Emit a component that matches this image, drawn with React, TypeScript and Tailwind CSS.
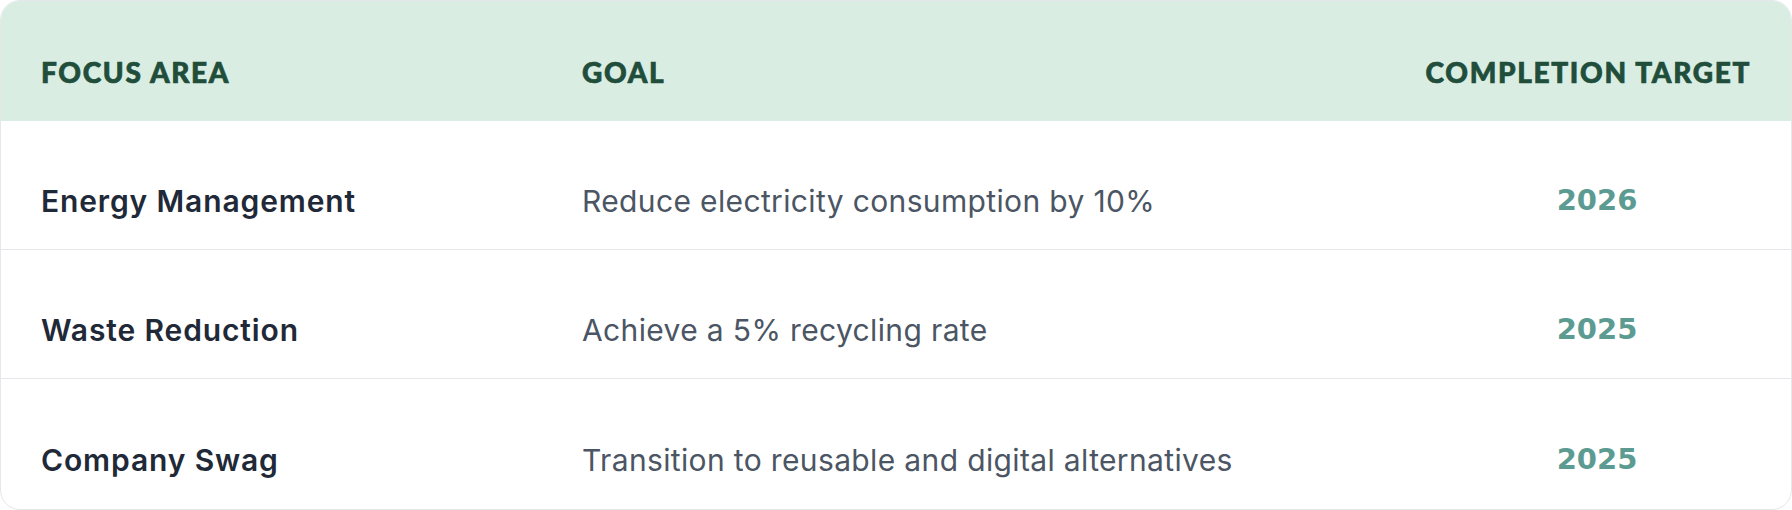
const goals = [
  { area: "Energy Management", goal: "Reduce electricity consumption by 10%", year: "2026" },
  { area: "Waste Reduction", goal: "Achieve a 5% recycling rate", year: "2025" },
  { area: "Company Swag", goal: "Transition to reusable and digital alternatives", year: "2025" },
];

const App = () => {
  return (
    <div className="w-full bg-white">
      <div className="border border-[#e5e7eb] rounded-[20px] overflow-hidden font-['Inter',sans-serif]">
        {/* header */}
        <div className="grid grid-cols-[541px_1fr_440px] h-[120px] bg-[#d9ede3] text-[#214d3b] font-['Lato','DejaVu_Sans',sans-serif] font-black uppercase text-[28px] tracking-[0.06em] [-webkit-text-stroke:0.7px_#214d3b] pt-[22px] items-center">
          <div className="px-10">Focus Area</div>
          <div className="px-10">Goal</div>
          <div className="px-10 text-right whitespace-nowrap">Completion Target</div>
        </div>

        {goals.map((g, i) => (
          <div
            key={g.area}
            className={`grid grid-cols-[541px_1fr_440px] items-center pt-[32px] ${
              i < goals.length - 1 ? "h-[129px] border-b border-[#e5e7eb]" : "h-[130px]"
            }`}
          >
            <div className="px-10 text-[30px] font-semibold tracking-[0.029em] text-[#1f2937]">{g.area}</div>
            <div className="px-10 text-[30px] tracking-[0.012em] text-[#4b5563]">{g.goal}</div>
            <div className="pl-[92px] pr-10 text-center text-[29px] font-bold text-[#5b9b91] font-['DejaVu_Sans',sans-serif]">
              {g.year}
            </div>
          </div>
        ))}
      </div>
    </div>
  );
};

export default App;
